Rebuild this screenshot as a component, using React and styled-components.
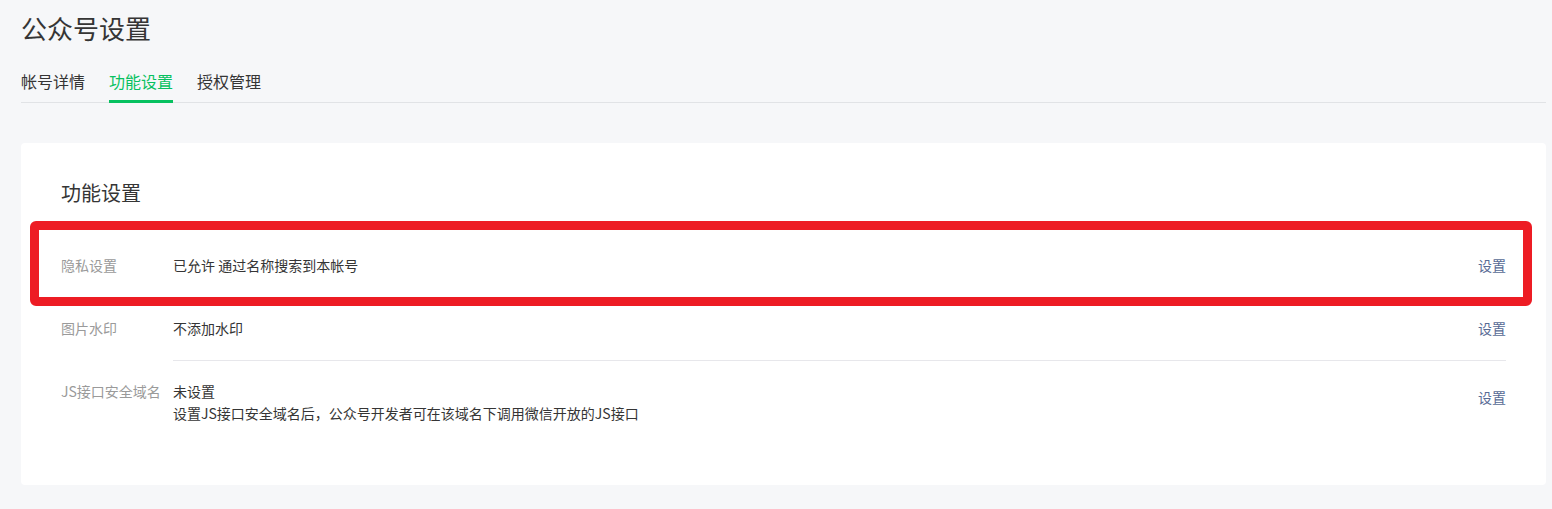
import styled, { createGlobalStyle } from "styled-components";

const GlobalStyle = createGlobalStyle`
  body {
    margin: 0;
    background: #f6f7f9;
    font-family: "Noto Sans CJK SC", "Noto Sans", sans-serif;
    color: #353535;
  }
`;

const Page = styled.div`
  padding: 10px 6px 24px 21px;
`;

const Title = styled.h1`
  margin: 0;
  font-size: 26px;
  line-height: 36px;
  font-weight: 400;
  color: #353535;
`;

const Tabs = styled.div`
  display: flex;
  gap: 24px;
  margin-top: 24px;
  border-bottom: 1px solid #e1e3e6;
`;

const Tab = styled.div`
  font-size: 16px;
  line-height: 22px;
  padding-bottom: 8px;
  margin-bottom: -1px;
  border-bottom: 3px solid ${(p) => (p.active ? "#07c160" : "transparent")};
  color: ${(p) => (p.active ? "#07c160" : "#353535")};
  cursor: pointer;
`;

const Card = styled.div`
  margin-top: 40px;
  background: #fff;
  border-radius: 4px;
  padding: 36px 40px 39px;
`;

const CardTitle = styled.h2`
  margin: 0 0 28px;
  font-size: 20px;
  line-height: 28px;
  font-weight: 400;
  color: #353535;
`;

const Row = styled.div`
  position: relative;
  display: flex;
  font-size: 14px;
  line-height: 22px;
`;

const Label = styled.div`
  width: 112px;
  flex-shrink: 0;
  padding-top: 19px;
  color: #9a9a9a;
`;

const Body = styled.div`
  flex: 1;
  display: flex;
  justify-content: space-between;
  padding: 19px 0 21px;
  border-bottom: 1px solid ${(p) => (p.last ? "transparent" : "#e7e7eb")};
`;

const Value = styled.div`
  color: #353535;
`;

const Link = styled.a`
  color: #576b95;
  text-decoration: none;
  cursor: pointer;
  margin-top: ${(p) => p.offset || 0}px;
  align-self: flex-start;
`;

const Highlight = styled.div`
  position: absolute;
  top: -14px;
  left: -31px;
  right: -26px;
  bottom: -8px;
  border: 9px solid #ed1c24;
  border-radius: 6px;
  pointer-events: none;
`;

const rows = [
  { label: "隐私设置", value: ["已允许 通过名称搜索到本帐号"], highlight: true },
  { label: "图片水印", value: ["不添加水印"] },
  {
    label: "JS接口安全域名",
    value: ["未设置", "设置JS接口安全域名后，公众号开发者可在该域名下调用微信开放的JS接口"],
    offset: 6,
  },
];

export default function App() {
  return (
    <Page>
      <GlobalStyle />
      <Title>公众号设置</Title>
      <Tabs>
        <Tab>帐号详情</Tab>
        <Tab active>功能设置</Tab>
        <Tab>授权管理</Tab>
      </Tabs>
      <Card>
        <CardTitle>功能设置</CardTitle>
        {rows.map((r, i) => (
          <Row key={r.label}>
            <Label>{r.label}</Label>
            <Body last={i === rows.length - 1}>
              <Value>
                {r.value.map((line) => (
                  <div key={line}>{line}</div>
                ))}
              </Value>
              <Link offset={r.offset}>设置</Link>
            </Body>
            {r.highlight && <Highlight />}
          </Row>
        ))}
      </Card>
    </Page>
  );
}
